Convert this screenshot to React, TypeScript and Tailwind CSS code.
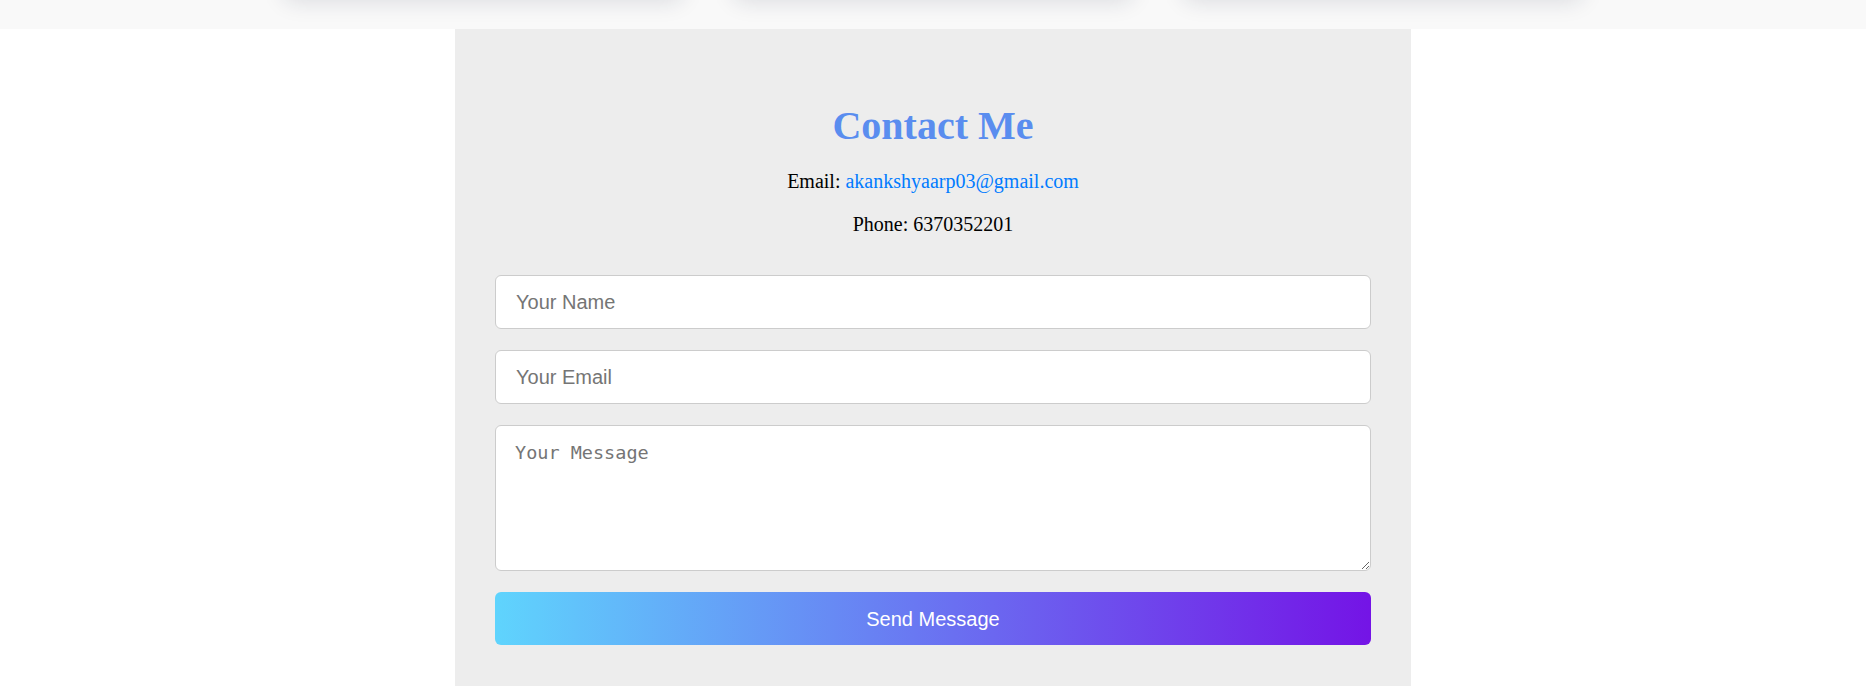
import React, { useState } from 'react';

const ContactPage: React.FC = () => {
  const [name, setName] = useState('');
  const [email, setEmail] = useState('');
  const [message, setMessage] = useState('');

  // the bottoms of the project cards from the section above
  const cards = [0, 1, 2];

  return (
    <div className="min-h-screen bg-white font-['Liberation_Serif',serif]">
      <div className="h-[29px] overflow-hidden bg-[#f9f9f9]">
        <div className="flex justify-center gap-[50px]">
          {cards.map((c) => (
            <div
              key={c}
              className="-mt-[60px] h-[56px] w-[400px] rounded-[12px] bg-[#f9f9f9] shadow-[0_6px_22px_rgba(20,30,60,0.13)]"
            />
          ))}
        </div>
      </div>

      <section className="mx-auto min-h-[657px] w-[956px] bg-[#ededed] px-[40px] pt-[74px] pb-[40px]">
        <h1 className="mb-[21px] text-center text-[40px] leading-[46px] font-bold text-[#5a8def]">
          Contact Me
        </h1>
        <p className="mb-[20px] text-center text-[20px] leading-[23px] text-black">
          Email:{' '}
          <a href="mailto:akankshyaarp03@gmail.com" className="text-[#007bff]">
            akankshyaarp03@gmail.com
          </a>
        </p>
        <p className="text-center text-[20px] leading-[23px] text-black">Phone: 6370352201</p>

        <form
          className="mt-[39px] flex flex-col gap-[21px]"
          onSubmit={(e) => e.preventDefault()}
        >
          <input
            type="text"
            value={name}
            onChange={(e) => setName(e.target.value)}
            placeholder="Your Name"
            className="h-[54px] w-full rounded-[6px] border border-[#cccccc] bg-white px-[20px] font-['Liberation_Sans',Arial,sans-serif] text-[20px] text-black outline-none placeholder:text-[#757575]"
          />
          <input
            type="email"
            value={email}
            onChange={(e) => setEmail(e.target.value)}
            placeholder="Your Email"
            className="h-[54px] w-full rounded-[6px] border border-[#cccccc] bg-white px-[20px] font-['Liberation_Sans',Arial,sans-serif] text-[20px] text-black outline-none placeholder:text-[#757575]"
          />
          <textarea
            value={message}
            onChange={(e) => setMessage(e.target.value)}
            placeholder="Your Message"
            className="block h-[146px] w-full rounded-[6px] border border-[#cccccc] bg-white px-[19px] pt-[16px] pb-[14px] font-['DejaVu_Sans_Mono',monospace] text-[18.5px] leading-[22px] text-black outline-none placeholder:text-[#757575]"
          />
          <button
            type="submit"
            className="h-[53px] w-full rounded-[6px] bg-[linear-gradient(90deg,#5fd4fd,#7414e6)] font-['Liberation_Sans',Arial,sans-serif] text-[20px] text-white"
          >
            Send Message
          </button>
        </form>
      </section>
    </div>
  );
};

export default function App() {
  return <ContactPage />;
}
